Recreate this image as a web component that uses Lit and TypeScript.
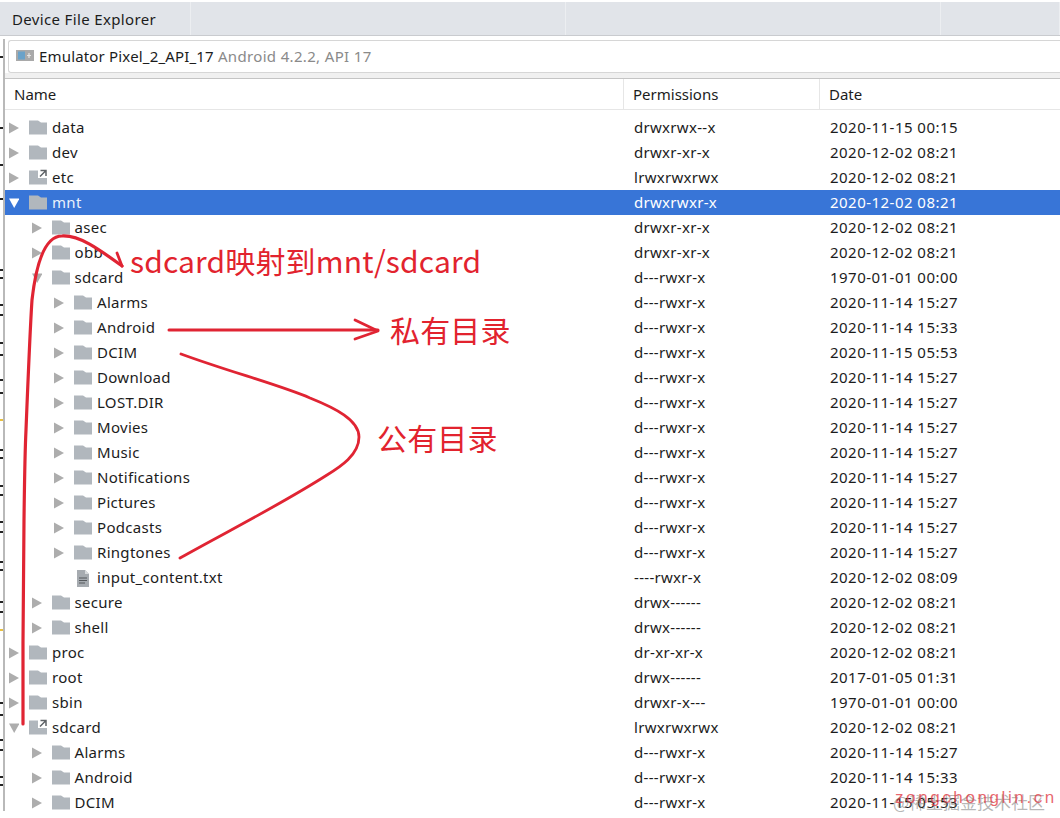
import { LitElement, html, css, svg } from "lit";
import { customElement } from "lit/decorators.js";

type Kind = "folder" | "link" | "file";
interface Row { name: string; perm: string; date: string; level: number; open?: boolean; leaf?: boolean; kind?: Kind; selected?: boolean }

const d = "2020-11-14 15:27";
const rows: Row[] = [
  { name: "data", perm: "drwxrwx--x", date: "2020-11-15 00:15", level: 0 },
  { name: "dev", perm: "drwxr-xr-x", date: "2020-12-02 08:21", level: 0 },
  { name: "etc", perm: "lrwxrwxrwx", date: "2020-12-02 08:21", level: 0, kind: "link" },
  { name: "mnt", perm: "drwxrwxr-x", date: "2020-12-02 08:21", level: 0, open: true, selected: true },
  { name: "asec", perm: "drwxr-xr-x", date: "2020-12-02 08:21", level: 1 },
  { name: "obb", perm: "drwxr-xr-x", date: "2020-12-02 08:21", level: 1 },
  { name: "sdcard", perm: "d---rwxr-x", date: "1970-01-01 00:00", level: 1, open: true },
  { name: "Alarms", perm: "d---rwxr-x", date: d, level: 2 },
  { name: "Android", perm: "d---rwxr-x", date: "2020-11-14 15:33", level: 2 },
  { name: "DCIM", perm: "d---rwxr-x", date: "2020-11-15 05:53", level: 2 },
  { name: "Download", perm: "d---rwxr-x", date: d, level: 2 },
  { name: "LOST.DIR", perm: "d---rwxr-x", date: d, level: 2 },
  { name: "Movies", perm: "d---rwxr-x", date: d, level: 2 },
  { name: "Music", perm: "d---rwxr-x", date: d, level: 2 },
  { name: "Notifications", perm: "d---rwxr-x", date: d, level: 2 },
  { name: "Pictures", perm: "d---rwxr-x", date: d, level: 2 },
  { name: "Podcasts", perm: "d---rwxr-x", date: d, level: 2 },
  { name: "Ringtones", perm: "d---rwxr-x", date: d, level: 2 },
  { name: "input_content.txt", perm: "----rwxr-x", date: "2020-12-02 08:09", level: 2, leaf: true, kind: "file" },
  { name: "secure", perm: "drwx------", date: "2020-12-02 08:21", level: 1 },
  { name: "shell", perm: "drwx------", date: "2020-12-02 08:21", level: 1 },
  { name: "proc", perm: "dr-xr-xr-x", date: "2020-12-02 08:21", level: 0 },
  { name: "root", perm: "drwx------", date: "2017-01-05 01:31", level: 0 },
  { name: "sbin", perm: "drwxr-x---", date: "1970-01-01 00:00", level: 0 },
  { name: "sdcard", perm: "lrwxrwxrwx", date: "2020-12-02 08:21", level: 0, open: true, kind: "link" },
  { name: "Alarms", perm: "d---rwxr-x", date: d, level: 1 },
  { name: "Android", perm: "d---rwxr-x", date: "2020-11-14 15:33", level: 1 },
  { name: "DCIM", perm: "d---rwxr-x", date: "2020-11-15 05:53", level: 1 },
];

const folder = svg`<path d="M0 1.5h9l3 2h6v12H0z" fill="#b1b7bd"/>`;
const edgeMarks = [57, 128, 165, 199, 270, 278, 305, 315, 343, 355, 380, 393, 450, 458, 486, 495, 522, 532, 562, 570, 602, 612, 703, 715, 740, 750, 777, 785];

@customElement("app-root")
export class AppRoot extends LitElement {
  static styles = css`
    :host { display: block; position: relative; width: 1060px; height: 818px; overflow: hidden; background: #fff;
      font-family: "Noto Sans", "Noto Sans CJK SC", sans-serif; font-size: 15px; color: #1c1c1c; }
    .tabbar { margin-top: 2px; height: 33px; background: #e1e4e9; border-bottom: 1px solid #c9cbcf; display: grid;
      grid-template-columns: 191px 375px 375px 1fr; box-sizing: content-box; letter-spacing: .35px; }
    .tabbar div { border-right: 1px solid #eceef1; display: flex; align-items: center; padding-left: 12px; }
    .panel { margin-left: 3px; border-left: 2px solid #b9b9b9; height: 772px; overflow: hidden; box-sizing: border-box; margin-top: 3px; }
    .combo { height: 33px; margin: 1px 0 0 3px; border: 1px solid #d6d6d6; border-right: 0; border-radius: 3px 0 0 3px; display: flex; align-items: center; gap: 5px; padding: 0 0 2px 7px; box-sizing: border-box; letter-spacing: .17px; }
    .combo .sub { color: #8a8a8a; letter-spacing: .34px; }
    .strip { height: 5px; background: #f0f0f0; border-bottom: 1px solid #c4c4c4; box-sizing: content-box; }
    .head { height: 30px; display: grid; grid-template-columns: 619px 196px 1fr; border-bottom: 1px solid #e6e6e6; box-sizing: content-box; }
    .head div { display: flex; align-items: center; padding: 0 0 0 9px; border-right: 1px solid #e6e6e6; }
    .head div:last-child { border-right: 0; }
    .rows { padding-top: 5px; }
    .row { height: 25px; display: grid; grid-template-columns: 619px 196px 1fr; align-items: center; white-space: nowrap; }
    .row.sel { background: #3875d7; color: #fff; }
    .row.sel .name { color: #eaf1fb; }
    .namecell { display: flex; align-items: center; }
    .name { padding-bottom: 2px; letter-spacing: .3px; }
    .tw { width: 10px; height: 12px; margin-right: 10px; flex: none; display: block; }
    .ic { width: 18px; height: 18px; margin-right: 5px; flex: none; display: block; }
    .perm { padding: 0 0 2px 10px; letter-spacing: .3px; }
    .date { padding: 0 0 2px 10px; letter-spacing: .47px; }
    .overlay { position: absolute; left: 0; top: 0; pointer-events: none; }
    .note { position: absolute; color: #e2232e; font-size: 30px; line-height: 40px; white-space: nowrap; font-family: "Noto Sans CJK SC", "Noto Sans", sans-serif; letter-spacing: .15px; }
    .n1 { left: 130px; top: 240px; }
    .n2 { left: 390px; top: 309px; }
    .n3 { left: 377px; top: 417px; }
    .wm1 { position: absolute; left: 895px; top: 788px; color: rgba(226, 60, 70, .78); font-size: 17px; letter-spacing: 2.6px; font-family: "Liberation Sans", sans-serif; white-space: nowrap; }
    .wm2 { position: absolute; left: 893px; top: 789px; color: rgba(120, 120, 120, .55); font-size: 17px; white-space: nowrap; font-family: "Noto Sans CJK SC", sans-serif; }
  `;

  private tw(r: Row) {
    if (r.leaf) return html`<svg class="tw" viewBox="0 0 10 12"></svg>`;
    const fill = r.selected ? "#fff" : "#adadad";
    return html`<svg class="tw" viewBox="0 0 10 12">${r.open
      ? svg`<path d="M0 1.5h10.5L5.2 11z" fill=${fill}/>`
      : svg`<path d="M0 .5l10 5.5-10 5.5z" fill=${fill}/>`}</svg>`;
  }

  private icon(r: Row) {
    if (r.kind === "file") {
      return html`<svg class="ic" viewBox="0 0 18 18">
        <path d="M3 1h8l4 4v13H3z" fill="#a6abb0"/><path d="M11 1l4 4h-4z" fill="#d8dbdd"/>
        <path d="M5 9h8M5 11.5h8M5 14h6" stroke="#55595d" stroke-width="1"/></svg>`;
    }
    return html`<svg class="ic" viewBox="0 0 18 18">${folder}${r.kind === "link"
      ? svg`<path d="M9 0h9v9H9z" fill="#fff"/><path d="M11.5 1.5h5.5v5.5M17 1.5L11 7.5" fill="none" stroke="#5f6367" stroke-width="1.5"/>`
      : ""}</svg>`;
  }

  render() {
    return html`
      <div class="tabbar"><div>Device File Explorer</div><div></div><div></div><div></div></div>
      <div class="panel">
        <div class="combo">
          <svg width="18" height="11" viewBox="0 0 18 11" style="flex:none"><rect width="18" height="11" fill="#a9a9a9"/><rect x="2" y="1.5" width="7" height="8" fill="#6aa2c9"/><path d="M13 3v5M11 5.5h4" stroke="#e4e4e4" stroke-width="1.2"/></svg>
          <span>Emulator Pixel_2_API_17 <span class="sub">Android 4.2.2, API 17</span></span>
        </div>
        <div class="strip"></div>
        <div class="head"><div>Name</div><div>Permissions</div><div>Date</div></div>
        <div class="rows">
          ${rows.map((r) => html`
            <div class="row ${r.selected ? "sel" : ""}">
              <div class="namecell" style="padding-left:${4 + r.level * 22.5}px">${this.tw(r)}${this.icon(r)}<span class="name">${r.name}</span></div>
              <div class="perm">${r.perm}</div>
              <div class="date">${r.date}</div>
            </div>`)}
        </div>
      </div>
      <svg class="overlay" width="1060" height="818" viewBox="0 0 1060 818" fill="none" stroke="#e02433" stroke-linecap="round" stroke-linejoin="round">
        <path d="M23 724V642L24 520C24.500 480 25 450 26 430C28 380 30 330 32 300C36 265 44 236 62 236C80 235 100 250 122 266" stroke-width="3.2"/>
        <path d="M117 253L122 266" stroke-width="2.8"/>
        <path d="M169 330H378" stroke-width="3"/>
        <path d="M355 320L378 331L355 339" stroke-width="2.8"/>
        <path d="M181 354C230 372 280 385 310 398C335 408 359 420 359 437C359 455 340 467 327 475C280 505 230 530 180 558" stroke-width="2.8"/>
        <g stroke="#222" stroke-width="2" stroke-linecap="butt">
          ${edgeMarks.map((y) => svg`<path d="M0 ${y}H3"/>`)}
        </g>
        <path d="M0 420H3M0 630H3" stroke="#e8c040" stroke-width="2" stroke-linecap="butt"/>
      </svg>
      <div class="note n1">sdcard映射到mnt/sdcard</div>
      <div class="note n2">私有目录</div>
      <div class="note n3">公有目录</div>
      <div class="wm2">@稀土掘金技术社区</div>
      <div class="wm1">zongchonglin.cn</div>
    `;
  }
}
